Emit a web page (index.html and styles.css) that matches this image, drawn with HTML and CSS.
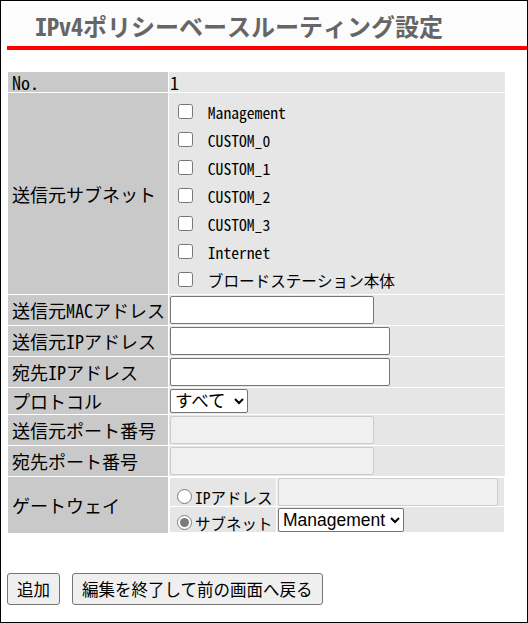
FILE: index.html
```html
<!DOCTYPE html>
<html lang="ja">
<head>
    <meta charset="UTF-8">
    <meta name="viewport" content="width=device-width, initial-scale=1.0">
    <title>IPv4ポリシーベースルーティング設定</title>
    <link rel="stylesheet" href="styles.css">
</head>
<body>
<div class="page">
    <h1 class="title">IPv4ポリシーベースルーティング設定</h1>
    <form id="policyForm">
        <table class="edit">
            <tr>
                <th>No.</th>
                <td>1</td>
            </tr>
            <tr>
                <th>送信元サブネット</th>
                <td class="subnets">
                    <label class="chk"><input type="checkbox" name="subnet" value="mgmt"> Management</label>
                    <label class="chk"><input type="checkbox" name="subnet" value="c0"> CUSTOM_0</label>
                    <label class="chk"><input type="checkbox" name="subnet" value="c1"> CUSTOM_1</label>
                    <label class="chk"><input type="checkbox" name="subnet" value="c2"> CUSTOM_2</label>
                    <label class="chk"><input type="checkbox" name="subnet" value="c3"> CUSTOM_3</label>
                    <label class="chk"><input type="checkbox" name="subnet" value="inet"> Internet</label>
                    <label class="chk"><input type="checkbox" name="subnet" value="self"> ブロードステーション本体</label>
                </td>
            </tr>
            <tr>
                <th>送信元MACアドレス</th>
                <td><input type="text" class="txt mac"></td>
            </tr>
            <tr>
                <th>送信元IPアドレス</th>
                <td><input type="text" class="txt ip"></td>
            </tr>
            <tr>
                <th>宛先IPアドレス</th>
                <td><input type="text" class="txt ip"></td>
            </tr>
            <tr>
                <th>プロトコル</th>
                <td>
                    <select class="sel proto">
                        <option>すべて</option>
                        <option>TCP</option>
                        <option>UDP</option>
                    </select>
                </td>
            </tr>
            <tr>
                <th>送信元ポート番号</th>
                <td><input type="text" class="txt mac" disabled></td>
            </tr>
            <tr>
                <th>宛先ポート番号</th>
                <td><input type="text" class="txt mac" disabled></td>
            </tr>
            <tr>
                <th>ゲートウェイ</th>
                <td class="gw">
                    <table class="gw-table">
                        <tr>
                            <td class="gw-opt"><label><input type="radio" name="gw" value="ip">IPアドレス</label></td>
                            <td class="gw-val"><input type="text" class="txt ip" disabled></td>
                        </tr>
                        <tr>
                            <td class="gw-opt"><label><input type="radio" name="gw" value="subnet" checked>サブネット</label></td>
                            <td class="gw-val">
                                <select class="sel gw-sel">
                                    <option>Management</option>
                                    <option>CUSTOM_0</option>
                                    <option>Internet</option>
                                </select>
                            </td>
                        </tr>
                    </table>
                </td>
            </tr>
        </table>

        <div class="buttons">
            <button type="submit">追加</button>
            <button type="button">編集を終了して前の画面へ戻る</button>
        </div>
    </form>
</div>
</body>
</html>
```

FILE: styles.css
```css
body {
    margin: 0;
}

.page {
    width: 526px;
    height: 621px;
    border: 1px solid #000;
    font-family: "Noto Sans Mono CJK JP", "Liberation Mono", "Noto Sans CJK JP", monospace;
    color: #000;
}

.title {
    margin: 6px 0 0 6px;
    height: 39px;
    padding-left: 28px;
    line-height: 38px;
    background-color: #fcfcfc;
    border-bottom: 4px solid #f00;
    color: #666;
    font-size: 24px;
    font-weight: bold;
}

.edit {
    margin: 21px 0 0 6px;
    width: 499px;
    border-spacing: 1px;
}

.edit th {
    width: 155px;
    padding: 1px 1px 1px 4px;
    background-color: #c9c9c9;
    font-weight: normal;
    text-align: left;
    font-size: 18px;
    line-height: 18px;
    white-space: nowrap;
}

.edit td {
    padding: 1px;
    background-color: #e6e6e6;
    font-size: 18px;
    line-height: 18px;
}

.edit td.subnets {
    padding: 5px 1px 0 7px;
}

.chk {
    display: block;
    height: 28px;
    line-height: 28px;
    font-size: 15.6px;
}

.chk input {
    width: 15px;
    height: 15px;
    margin: 0 7px 1px 2px;
}

.txt {
    box-sizing: border-box;
    height: 28px;
    padding: 1px 2px;
    border: 1px solid #767676;
    border-radius: 2px;
    background-color: #fff;
    vertical-align: middle;
}

.txt:disabled {
    background-color: #f0f0f0;
    border-color: #cccccc;
}

.mac {
    width: 204px;
}

.ip {
    width: 220px;
}

.sel {
    box-sizing: border-box;
    height: 24px;
    border: 1px solid #767676;
    border-radius: 2px;
    background-color: #fff;
    font-family: "Liberation Sans", "Noto Sans CJK JP", sans-serif;
    font-size: 17.5px;
    vertical-align: middle;
}

.proto {
    width: 78px;
}

.gw-sel {
    width: 126px;
}

.edit td.gw {
    padding: 0;
    background: none;
}

.gw-table {
    width: 100%;
    border-spacing: 1px;
}

.gw-table td {
    padding: 0;
}

.edit .gw-table td.gw-opt {
    width: 104px;
    padding: 0 0 0 2px;
    vertical-align: bottom;
    font-size: 15.5px;
    line-height: 18px;
    white-space: nowrap;
}

.gw-opt input {
    width: 15px;
    height: 15px;
    margin: 0 3px 0 5px;
    accent-color: #7b7b7b;
}

.edit .gw-table td.gw-val {
    padding: 0 1px;
}

.gw-table tr + tr td {
    height: 25px;
}

.buttons {
    display: flex;
    gap: 12px;
    margin: 39px 0 0 6px;
}

.buttons button {
    height: 32px;
    padding: 0 9px;
    border: 1px solid #767676;
    border-radius: 3px;
    background-color: #efefef;
    color: #000;
    font-family: "Noto Sans CJK JP", sans-serif;
    font-size: 16.5px;
}
```
